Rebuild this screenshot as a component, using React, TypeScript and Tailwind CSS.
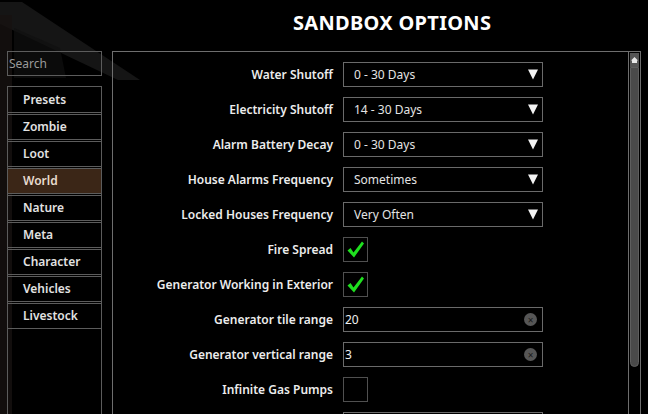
import { useState } from 'react'

type Option =
  | { kind: 'select'; label: string; value: string }
  | { kind: 'check'; label: string; checked: boolean }
  | { kind: 'text'; label: string; value: string }

const categories = ['Presets', 'Zombie', 'Loot', 'World', 'Nature', 'Meta', 'Character', 'Vehicles', 'Livestock']

const options: Option[] = [
  { kind: 'select', label: 'Water Shutoff', value: '0 - 30 Days' },
  { kind: 'select', label: 'Electricity Shutoff', value: '14 - 30 Days' },
  { kind: 'select', label: 'Alarm Battery Decay', value: '0 - 30 Days' },
  { kind: 'select', label: 'House Alarms Frequency', value: 'Sometimes' },
  { kind: 'select', label: 'Locked Houses Frequency', value: 'Very Often' },
  { kind: 'check', label: 'Fire Spread', checked: true },
  { kind: 'check', label: 'Generator Working in Exterior', checked: true },
  { kind: 'text', label: 'Generator tile range', value: '20' },
  { kind: 'text', label: 'Generator vertical range', value: '3' },
  { kind: 'check', label: 'Infinite Gas Pumps', checked: false },
  // next row only peeks in below the fold
  { kind: 'select', label: '', value: '' },
]

function Arrow() {
  return (
    <svg width="10" height="11" viewBox="0 0 10 11" className="shrink-0">
      <path d="M0 0.5 H10 L5 10.5 Z" fill="#f2f2f2" />
    </svg>
  )
}

function Check() {
  return (
    <svg width="19" height="19" viewBox="0 0 19 19">
      <path d="M1.5 10.5 L4.5 8 L7.5 12.5 L16 1.5 L18 3.5 L8 17.5 Z" fill="#1fe01f" />
    </svg>
  )
}

function OptionControl({ opt }: { opt: Option }) {
  if (opt.kind === 'select') {
    return (
      <div className="w-[200px] h-[25px] border border-[#6a6a6a] flex items-center justify-between pl-[10px] pr-[4px] text-[12px] text-[#e4e4e4]">
        <span>{opt.value}</span>
        {opt.value && <Arrow />}
      </div>
    )
  }
  if (opt.kind === 'check') {
    return (
      <div className="w-[25px] h-[25px] border border-[#505050] flex items-center justify-center">
        {opt.checked && <Check />}
      </div>
    )
  }
  return (
    <div className="w-[200px] h-[25px] border border-[#6a6a6a] flex items-center justify-between pl-[1px] pr-[5px] text-[12px] text-[#f0f0f0]">
      <span>{opt.value}</span>
      <span className="w-[13px] h-[13px] rounded-full bg-[#565656] flex items-center justify-center text-[#1a1a1a] text-[10px] leading-none">
        ×
      </span>
    </div>
  )
}

export default function App() {
  const [active, setActive] = useState('World')

  return (
    <div
      className="relative w-[648px] h-[414px] overflow-hidden bg-black text-white"
      style={{ fontFamily: '"Noto Sans", "Open Sans", sans-serif' }}
    >
      {/* faint backdrop beams behind the menu */}
      <svg className="absolute inset-0 pointer-events-none" width="648" height="414">
        <polygon points="0,2 22,2 140,80 118,80 0,24" fill="#262626" opacity="0.55" />
        <polygon points="0,15 12,15 12,414 0,414" fill="#161210" opacity="0.8" />
        <polygon points="14,28 60,48 66,78 14,78" fill="#101010" opacity="0.7" />
      </svg>

      <div className="relative flex flex-col h-full">
        <div className="h-[51px] flex items-center pl-[293px] pb-[5px]">
          <h1 className="text-[20px] font-bold tracking-[0.3px] text-white">SANDBOX OPTIONS</h1>
        </div>

        <div className="flex flex-1 min-h-0">
          <div className="ml-[7px] w-[95px] flex flex-col">
            <div className="h-[25px] border border-[#5c5c5c] flex items-center px-[1px] text-[12px] text-[#9a9a9a]">
              Search
            </div>
            <div className="mt-[10px] flex-1 border-x border-[#5c5c5c] flex flex-col gap-[1px] border-t">
              {categories.map(c => (
                <button
                  key={c}
                  onClick={() => setActive(c)}
                  className={`h-[26px] text-left pl-[15px] text-[12px] font-semibold border-b border-[#5c5c5c] ${
                    c === active ? 'bg-[#3b2617] text-[#e8dccf]' : 'text-[#e2e2e2]'
                  } ${c === 'Presets' ? '' : 'border-t'}`}
                >
                  {c}
                </button>
              ))}
            </div>
          </div>

          <div className="ml-[10px] w-[516px] border-l border-t border-[#6e6e6e] pt-[10px] flex flex-col gap-[10px]">
            {options.map((o, i) => (
              <div key={i} className="flex items-center h-[25px] shrink-0">
                <div className="w-[220px] text-right text-[12px] font-semibold text-[#ececec]">{o.label}</div>
                <div className="ml-[10px]">
                  <OptionControl opt={o} />
                </div>
              </div>
            ))}
          </div>

          {/* scrollbar */}
          <div className="w-[13px] border border-b-0 border-[#6e6e6e] flex flex-col pt-[1px]">
            <div className="h-[14px] mx-[1px] bg-[#555] flex items-center justify-center">
              <svg width="7" height="6" viewBox="0 0 7 6">
                <path d="M3.5 0 L7 3.5 H6 V6 H1 V3.5 H0 Z" fill="#e8e8e8" />
              </svg>
            </div>
            <div className="h-[300px] mx-[1px] bg-[#4a4a4a] border border-[#5e5e5e] rounded-b-[5px]" />
          </div>
        </div>
      </div>
    </div>
  )
}
